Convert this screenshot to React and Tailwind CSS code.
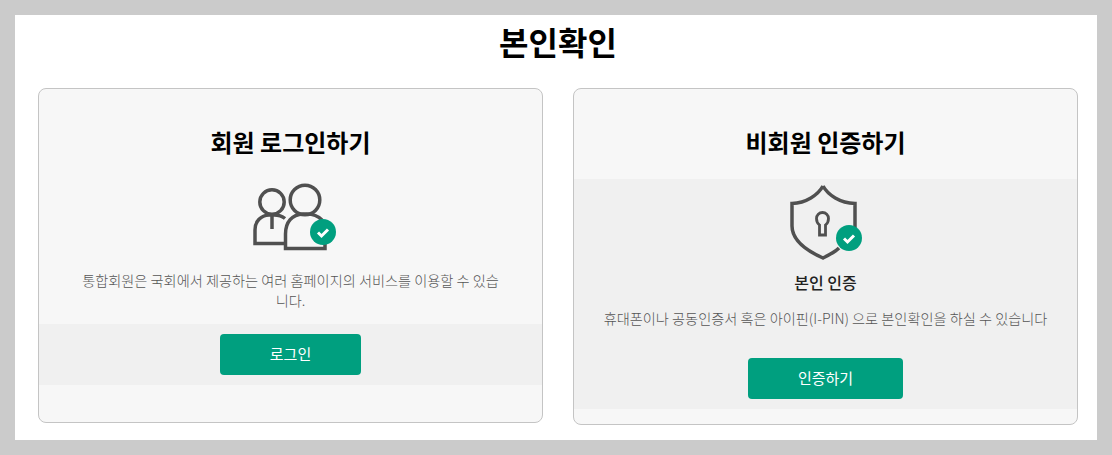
const font = { fontFamily: '"Noto Sans CJK KR", "Noto Sans", sans-serif' };

const Check = ({ cx, cy }) => (
  <g>
    <circle cx={cx} cy={cy} r="13" fill="#009f7f" stroke="none" />
    <path d={`M${cx - 5} ${cy + 0.5}l3.500 3.500 6.500-6.500`} fill="none" stroke="#fff" strokeWidth="3" />
  </g>
);

const MembersIcon = () => (
  <svg width="91" height="70" viewBox="0 0 91 70" fill="none" stroke="#505050" strokeWidth="3.500">
    <circle cx="27" cy="20" r="12.200" />
    <path d="M27 31v16" />
    <path d="M39 61.500H10V48c0-9 6-14.500 14-15h5c4 0 8 1 11 3.500" />
    <circle cx="60" cy="18" r="14.800" />
    <path d="M80 57v9.500H40.500V52c0-12 6.500-19.500 17.500-20h4c6 0 11 2 15 6" />
    <Check cx={78} cy={50} />
  </svg>
);

const ShieldIcon = () => (
  <svg width="81" height="80" viewBox="0 0 81 80" fill="none" stroke="#505050" strokeWidth="3.500">
    <path d="M38 2C43 11 55 19 70 19.500V44" />
    <path d="M38 2C33 11 21 19 7 19.500V42C7 56 20 66 38 74C44 71 50 68 54 64" />
    <path d="M34.500 51V41C32 39 31.500 37 31.500 34.500a6 6 0 0 1 12 0c0 2.500-.5 4.500-3 6.500V51z" strokeWidth="2.800" />
    <Check cx={64} cy={54} />
  </svg>
);

const App = () => {
  return (
    <div className="h-[455px] w-[1112px] overflow-hidden bg-[#cbcbcb] p-[15px]" style={font}>
      <div className="h-[425px] bg-white pr-[19px] pl-[23px]">
        <h1 className="h-[73px] pt-[1px] text-center text-[32px] leading-[50px] font-bold text-black">본인확인</h1>
        <div className="flex items-start gap-[30px]">
          {/* 회원 */}
          <div className="h-[335px] w-[505px] overflow-hidden rounded-lg border border-[#c4c4c4] bg-[#f7f7f7]">
            <h2 className="mt-[36px] text-center text-[24px] leading-[34px] font-bold text-black">회원 로그인하기</h2>
            <div className="mt-[23px] flex justify-center">
              <MembersIcon />
            </div>
            <p className="mx-auto mt-[18px] w-[426px] text-center text-[14.2px] leading-[20px] font-light text-[#555]">
              통합회원은 국회에서 제공하는 여러 홈페이지의 서비스를 이용할 수 있습니다.
            </p>
            <div className="mt-[14px] flex h-[61px] items-center justify-center bg-[#f0f0f0]">
              <button className="h-[41px] w-[141px] rounded bg-[#009f7f] text-[15px] text-white">로그인</button>
            </div>
          </div>
          {/* 비회원 */}
          <div className="h-[337px] w-[505px] overflow-hidden rounded-lg border border-[#c4c4c4] bg-[#f7f7f7]">
            <h2 className="mt-[36px] text-center text-[24px] leading-[34px] font-bold text-black">비회원 인증하기</h2>
            <div className="mt-[20px] h-[230px] bg-[#f0f0f0] pt-[5px]">
              <div className="flex justify-center">
                <ShieldIcon />
              </div>
              <p className="mt-[6px] text-center text-[16px] leading-[24px] font-medium text-[#222]">본인 인증</p>
              <p className="mt-[14px] text-center text-[14.2px] leading-[20px] font-light text-[#555]">
                휴대폰이나 공동인증서 혹은 아이핀(I-PIN) 으로 본인확인을 하실 수 있습니다
              </p>
              <div className="mt-[30px] flex justify-center">
                <button className="h-[41px] w-[155px] rounded bg-[#009f7f] text-[15px] text-white">인증하기</button>
              </div>
            </div>
          </div>
        </div>
      </div>
    </div>
  );
};

export default App;
